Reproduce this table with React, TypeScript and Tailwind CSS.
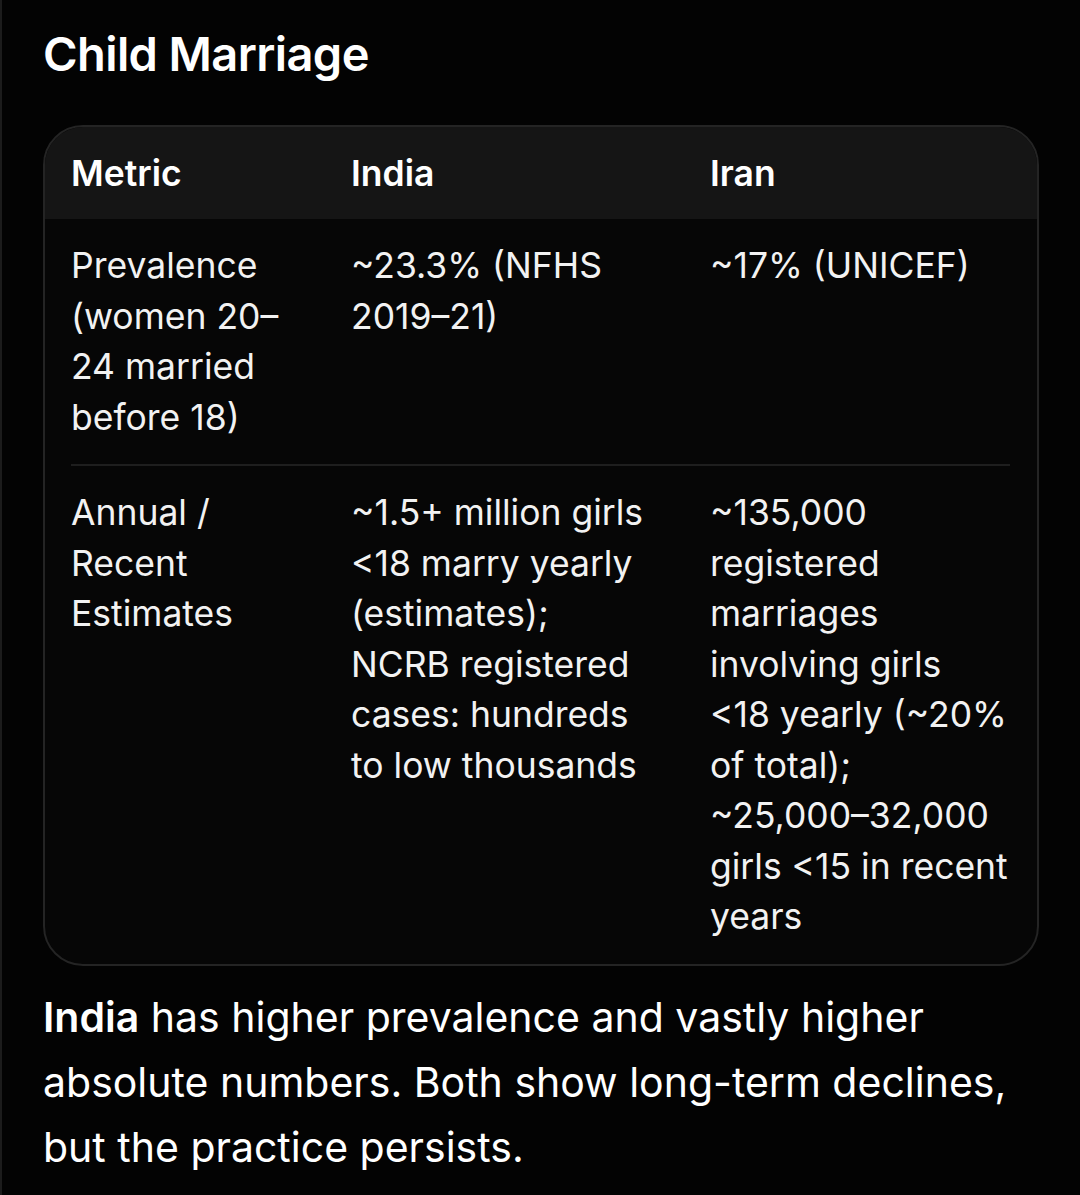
import React from "react";

const font = { fontFamily: "Inter, 'Noto Sans', sans-serif" };

export default function App() {
  return (
    <div className="min-h-[1195px] w-[1080px] bg-[#030303] flex text-[#f2f2f2]" style={font}>
      <div className="w-[2px] bg-[#1c1c1c] shrink-0" />
      <div className="flex-1 pl-[41px] pr-[41px]">
        <h2 className="pt-[25px] text-[47px] leading-[58px] font-semibold tracking-[-0.6px] text-white">Child Marriage</h2>
        <div className="mt-[42px] rounded-[40px] border-2 border-[#242424] bg-[#060606] overflow-hidden">
          <div className="bg-[#151515] px-[26px] pt-[22px] pb-[20px] grid grid-cols-[280px_359px_1fr] text-[35.5px] leading-[50px] font-semibold text-white">
            <div>Metric</div>
            <div>India</div>
            <div>Iran</div>
          </div>
          <div className="pl-[26px] pr-[27px] text-[35.5px] leading-[50.5px]">
            <div className="grid grid-cols-[280px_359px_1fr] pt-[22px] pb-[21px] border-b-2 border-[#1e1e1e]">
              <div className="pr-[64px]">Prevalence (women 20–24 married before 18)</div>
              <div className="pr-[64px]">~23.3% (NFHS 2019–21)</div>
              <div>~17% (UNICEF)</div>
            </div>
            <div className="grid grid-cols-[280px_359px_1fr] pt-[22px] pb-[21px]">
              <div className="pr-[64px]">Annual / Recent Estimates</div>
              <div className="pr-[64px]">~1.5+ million girls &lt;18 marry yearly (estimates); NCRB registered cases: hundreds to low thousands</div>
              <div>~135,000 registered marriages involving girls &lt;18 yearly (~20% of total); ~25,000–32,000 girls &lt;15 in recent years</div>
            </div>
          </div>
        </div>
        <p className="mt-[19px] text-[41px] leading-[65px] text-white">
          <span className="font-semibold">India</span> has higher prevalence and vastly higher absolute numbers. Both show long-term declines, but the practice persists.
        </p>
      </div>
    </div>
  );
}
